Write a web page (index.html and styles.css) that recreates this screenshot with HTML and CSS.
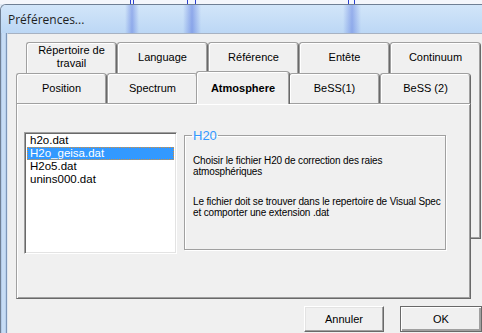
FILE: index.html
```html
<!DOCTYPE html>
<html lang="fr">
<head>
    <meta charset="UTF-8">
    <title>Préférences</title>
    <link rel="stylesheet" href="styles.css">
</head>
<body>
    <div class="desk"></div>
    <div class="window">
        <div class="titleBar">Préférences...</div>
        <div class="frame">
            <div class="edge"></div>
            <div class="client">
                <div class="tabCtrl">
                    <div class="tabRow backRow">
                        <span class="tab twoLines">Répertoire de<br>travail</span>
                        <span class="tab">Language</span>
                        <span class="tab">Référence</span>
                        <span class="tab">Entête</span>
                        <span class="tab">Continuum</span>
                    </div>
                    <div class="tabRow frontRow">
                        <span class="tab">Position</span>
                        <span class="tab">Spectrum</span>
                        <span class="tab active">Atmosphere</span>
                        <span class="tab">BeSS(1)</span>
                        <span class="tab">BeSS (2)</span>
                    </div>
                    <div class="tabBody">
                        <div class="panel">
                            <ul class="listBox">
                                <li>h2o.dat</li>
                                <li class="selected">H2o_geisa.dat</li>
                                <li>H2o5.dat</li>
                                <li>unins000.dat</li>
                            </ul>
                            <fieldset class="groupBox">
                                <legend>H20</legend>
                                <p>Choisir le fichier H20 de correction des raies<br>atmosphériques</p>
                                <p>Le fichier doit se trouver dans le repertoire de Visual Spec<br>et comporter une extension .dat</p>
                            </fieldset>
                        </div>
                        <div class="strip"></div>
                    </div>
                </div>
                <div class="buttons">
                    <button class="btn">Annuler</button>
                    <button class="btn btnDefault">OK</button>
                </div>
            </div>
        </div>
    </div>
</body>
</html>
```

FILE: styles.css
```css
* {
    padding: 0;
    margin: 0;
    list-style: none;
    box-sizing: border-box;
}

html, body {
    width: 482px;
    height: 333px;
    overflow: hidden;
}

body {
    font-family: "Liberation Sans", Arial, sans-serif;
    font-size: 11px;
    color: #000;
    background: #dfe9f5;
}

/* bureau derrière la fenêtre */
.desk {
    height: 4px;
    background:
        linear-gradient(90deg, transparent 130px, #2a3fd0 130px, #2a3fd0 131px, transparent 131px, transparent 133px, #2a3fd0 133px, #2a3fd0 134px, transparent 134px),
        linear-gradient(90deg, transparent 187px, #2a3fd0 187px, #2a3fd0 188px, transparent 188px, transparent 195px, #2a3fd0 195px, #2a3fd0 196px, transparent 196px),
        linear-gradient(90deg, transparent 348px, #2a3fd0 348px, #2a3fd0 349px, transparent 349px, transparent 354px, #2a3fd0 354px, #2a3fd0 355px, transparent 355px),
        #f4f6fb;
}

.window {
    border-top: 1px solid #6f7f94;
    border-left: 1px solid #6f7f94;
    border-top-left-radius: 6px;
    overflow: hidden;
}

.titleBar {
    height: 28px;
    padding: 8px 0 0 7px;
    font-family: "Open Sans", "Noto Sans", sans-serif;
    font-size: 12px;
    line-height: 14px;
    color: #1e1e1e;
    background:
        linear-gradient(90deg, transparent 124px, rgba(80, 110, 220, 0.45) 131px, transparent 138px),
        linear-gradient(90deg, transparent 182px, rgba(80, 110, 220, 0.5) 191px, transparent 200px),
        linear-gradient(90deg, transparent 342px, rgba(80, 110, 220, 0.45) 351px, transparent 360px),
        linear-gradient(180deg, #d2e5f9, #bcd7f5);
}

.frame {
    display: flex;
}

.edge {
    width: 6px;
    height: 300px;
    border-right: 1px solid #7d96b8;
    background: linear-gradient(90deg, #9fb9db 0, #c6dcf5 1px, #c6dcf5 4px, #a9c3e3 5px);
}

.client {
    flex: 1;
    height: 300px;
    padding: 8px 0 0 8px;
    background: #f0f0f0;
    border-top: 1px solid #a7b2c2;
    border-left: 1px solid #dde6f1;
}

/* onglets */
.tabCtrl {
    display: flex;
    flex-direction: column;
}

.tabRow {
    display: flex;
}

.backRow {
    margin-left: 10px;
    height: 31px;
}

.frontRow {
    height: 30px;
}

.tab {
    position: relative;
    display: flex;
    align-items: center;
    justify-content: center;
    width: 91px;
    text-align: center;
    line-height: 12px;
    background: #f0f0f0;
    border: 1px solid #a0a0a0;
    border-right-color: #696969;
    border-bottom: none;
    border-radius: 3px 4px 0 0;
    box-shadow: inset 1px 1px 0 #fff, inset -1px 0 0 #a0a0a0;
}

.backRow .tab {
    padding-bottom: 2px;
}

.twoLines {
    line-height: 13px;
}

.frontRow .tab {
    padding-bottom: 1px;
}

.tab.active {
    z-index: 2;
    width: 94px;
    margin: -2px -1px -1px -2px;
    padding-bottom: 0;
    font-weight: bold;
}

.tabBody {
    display: flex;
    align-items: flex-start;
}

.panel {
    display: flex;
    align-items: flex-start;
    width: 455px;
    height: 196px;
    padding: 25px 0 0 7px;
    border: 1px solid #a0a0a0;
    border-right-color: #696969;
    border-bottom-color: #696969;
    box-shadow: inset 1px 1px 0 #fff, inset -1px -1px 0 #a0a0a0;
}

.strip {
    width: 10px;
    height: 166px;
    margin-top: -30px;
    border-right: 1px solid #696969;
    border-bottom: 1px solid #696969;
    box-shadow: inset -1px -1px 0 #a0a0a0;
}

/* liste des fichiers */
.listBox {
    width: 153px;
    height: 122px;
    margin-top: 3px;
    padding: 1px;
    background: #fff;
    border: 1px solid #a0a0a0;
    border-right-color: #fff;
    border-bottom-color: #fff;
    box-shadow: inset 1px 1px 0 #696969, inset -1px -1px 0 #e3e3e3;
}

.listBox li {
    height: 13px;
    margin: 0 1px;
    padding-left: 3px;
    font-size: 11.5px;
    line-height: 13px;
    white-space: nowrap;
}

.listBox .selected {
    color: #fff;
    background: #3399ff;
    outline: 1px dotted #d89038;
    outline-offset: -1px;
}

/* cadre H20 */
.groupBox {
    width: 256px;
    height: 121px;
    margin-left: 7px;
    padding: 0 4px 0 8px;
    border: 1px solid #a0a0a0;
    box-shadow: 1px 1px 0 #fff, inset 1px 1px 0 #fff;
    font-size: 10px;
    line-height: 11px;
}

.groupBox legend {
    margin-left: -1px;
    padding: 0 1px;
    font-size: 13px;
    line-height: 13px;
    color: #3399ff;
}

.groupBox p {
    margin-top: 13px;
    letter-spacing: -0.15px;
    white-space: nowrap;
}

.groupBox p + p {
    margin-top: 19px;
}

/* boutons */
.buttons {
    display: flex;
    justify-content: flex-end;
    gap: 16px;
    margin-top: 7px;
}

.btn {
    width: 80px;
    height: 26px;
    font-family: "Liberation Sans", Arial, sans-serif;
    font-size: 11px;
    color: #000;
    background: #f0f0f0;
    border: 1px solid #fff;
    border-right-color: #696969;
    border-bottom-color: #696969;
    box-shadow: inset -1px -1px 0 #a0a0a0, inset 1px 1px 0 #e3e3e3;
}

.btnDefault {
    width: 82px;
    border: 1px solid #696969;
    box-shadow: inset 1px 1px 0 #fff, inset -2px -2px 0 #a0a0a0;
}
```
